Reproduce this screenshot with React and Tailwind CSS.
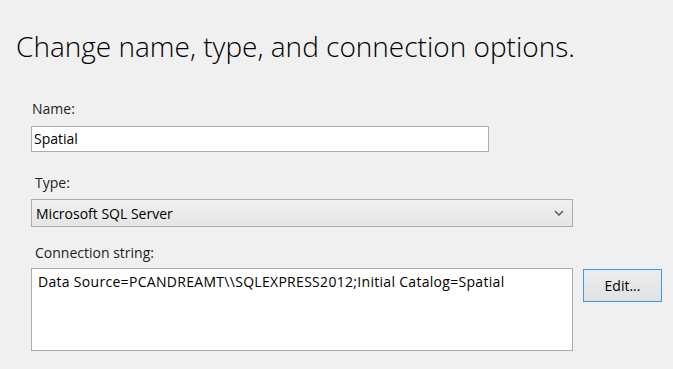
const App = () => {
  return (
    <div className="w-[673px] h-[369px] bg-[#f0f0f0] text-black overflow-hidden" style={{ fontFamily: '"Open Sans", "Noto Sans", sans-serif' }}>
      <div className="pt-[28px] pl-[16px]">
        <h1 className="text-[28px] font-light leading-[36px]">Change name, type, and connection options.</h1>
      </div>

      <div className="pl-[31px] mt-[36px] text-[14px]">
        <div className="pl-[1px] leading-[18px] text-[#1e1e1e]">Name:</div>
        <div className="mt-[8px] w-[458px] h-[26px] bg-white border border-[#acacac] flex items-center px-[2px] leading-none">
          Spatial
        </div>

        <div className="mt-[22px] pl-[4px] leading-[18px] text-[#1e1e1e]">Type:</div>
        <div className="mt-[7px] w-[542px] h-[28px] border border-[#acacac] bg-gradient-to-b from-[#f0f0f0] to-[#e5e5e5] flex items-center justify-between pl-[4px] pr-[8px]">
          <span>Microsoft SQL Server</span>
          <svg width="10" height="6" viewBox="0 0 10 6">
            <path d="M1 1 L5 5 L9 1" fill="none" stroke="#5a5a5a" strokeWidth="1.5" />
          </svg>
        </div>

        <div className="mt-[17px] pl-[4px] leading-[18px] text-[#1e1e1e]">Connection string:</div>
        <div className="mt-[6px] flex items-start gap-[10px]">
          <div className="w-[542px] h-[83px] bg-white border border-[#acacac] px-[6px] pt-[4px] leading-[18px] tracking-[0.3px]">
            Data Source=PCANDREAMT\\SQLEXPRESS2012;Initial Catalog=Spatial
          </div>
          <button className="mt-[1px] w-[79px] h-[33px] border border-[#3c9be6] bg-gradient-to-b from-[#ececec] to-[#e2e2e2] text-[14px] leading-none">
            Edit...
          </button>
        </div>
      </div>
    </div>
  );
};

export default App;
